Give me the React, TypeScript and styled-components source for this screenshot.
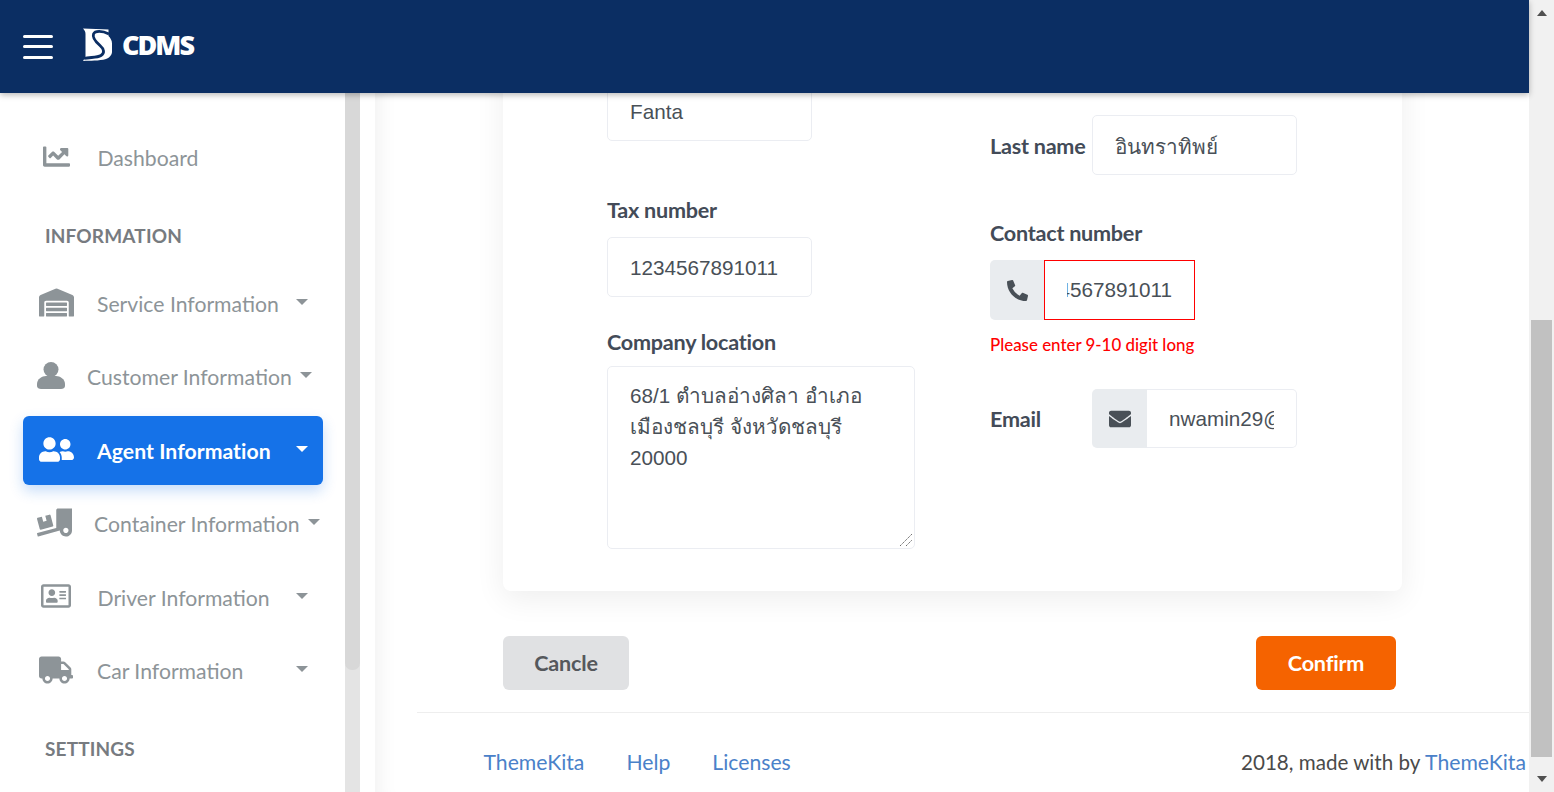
import React from 'react';
import styled, { createGlobalStyle } from 'styled-components';
import {
  FaChartLine,
  FaEnvelope,
  FaPhoneAlt,
  FaRegAddressCard,
  FaTruck,
  FaTruckLoading,
  FaUserFriends,
  FaWarehouse,
} from 'react-icons/fa';

const GlobalStyle = createGlobalStyle`
  html, body {
    margin: 0;
    height: 100%;
    overflow: hidden;
    background: #fff;
    font-family: Lato, "Noto Sans", sans-serif;
  }
  * {
    box-sizing: border-box;
  }
`;

const Page = styled.div`
  display: flex;
  height: 792px;
`;

const Shell = styled.div`
  flex: 1;
  min-width: 0;
  display: flex;
  flex-direction: column;
`;

const Header = styled.header`
  position: relative;
  z-index: 2;
  flex: none;
  height: 93px;
  display: flex;
  align-items: center;
  padding-left: 23px;
  background: #0b2e63;
  box-shadow: 0 2px 6px rgba(0, 0, 0, 0.28);
`;

const Burger = styled.div`
  width: 30px;
  display: grid;
  gap: 7.5px;
  margin-right: 30px;
`;

const BurgerBar = styled.span`
  height: 3px;
  border-radius: 2px;
  background: #fff;
`;

const BrandRow = styled.div`
  display: flex;
  align-items: center;
  margin-top: -4px;
`;

const Brand = styled.span`
  margin-left: 10px;
  color: #fff;
  font: 800 27px/1 'Open Sans', sans-serif;
  letter-spacing: -2px;
`;

const Body = styled.div`
  flex: 1;
  min-height: 0;
  display: flex;
`;

const Sidebar = styled.nav`
  flex: none;
  width: 345px;
  padding-top: 30.45px;
  overflow: hidden;
`;

const NavItem = styled.div<{ $left: number; $active?: boolean }>`
  width: 300px;
  height: 69px;
  margin: 0 0 4.5px 23px;
  padding-left: ${(p) => p.$left}px;
  display: flex;
  align-items: center;
  white-space: nowrap;
  border-radius: 6px;
  font-size: 21.2px;
  font-weight: ${(p) => (p.$active ? 700 : 400)};
  letter-spacing: ${(p) => (p.$active ? '0.05px' : '0')};
  color: ${(p) => (p.$active ? '#fff' : '#8d9498')};
  background: ${(p) => (p.$active ? '#1572e8' : 'transparent')};
  box-shadow: ${(p) => (p.$active ? '0 6px 14px rgba(21, 114, 232, 0.24)' : 'none')};
`;

const NavIcon = styled.span<{ $slot: number }>`
  flex: none;
  width: ${(p) => p.$slot}px;
  display: flex;
  align-items: center;
  margin-top: -3px;
`;

const Caret = styled.span<{ $gap: number }>`
  margin: -4px 0 0 ${(p) => p.$gap}px;
  border-top: 6px solid currentColor;
  border-left: 6px solid transparent;
  border-right: 6px solid transparent;
`;

const SectionTitle = styled.div`
  height: 30px;
  margin: 28.5px 0 18.5px 45px;
  font-size: 19px;
  line-height: 30px;
  font-weight: 700;
  letter-spacing: 0.15px;
  color: #777b80;
`;

const SideTrack = styled.div`
  flex: none;
  width: 15px;
  margin-right: 15px;
  background: #e4e4e4;
`;

const SideThumb = styled.div`
  height: 577px;
  border-radius: 0 0 7px 7px;
  background: #d8d8d8;
`;

const Main = styled.main`
  flex: 1;
  min-width: 0;
  padding-left: 42px;
  overflow: hidden;
  box-shadow: inset 22px 0 20px -18px rgba(0, 0, 0, 0.06);
`;

const Content = styled.div`
  padding-left: 86px;
`;

const Card = styled.section`
  width: 899px;
  margin-top: -40px;
  padding: 28px 0 42px 104px;
  display: flex;
  border-radius: 8px;
  background: #fff;
  box-shadow: 0 8px 30px rgba(0, 0, 0, 0.07);
`;

const LeftColumn = styled.div`
  width: 383px;
`;

const RightColumn = styled.div`
  padding-top: 34px;
`;

const FieldLabel = styled.label<{ $top?: number; $bottom?: number }>`
  display: block;
  height: 30px;
  margin: ${(p) => p.$top ?? 0}px 0 ${(p) => p.$bottom ?? 0}px;
  font-size: 21.6px;
  line-height: 30px;
  font-weight: 700;
  letter-spacing: -0.25px;
  color: #434b58;
`;

const InlineRow = styled.div`
  display: flex;
  align-items: center;
`;

const InlineLabel = styled(FieldLabel)`
  flex: none;
  width: 102px;
`;

const TextInput = styled.input<{ $width?: number; $invalid?: boolean; $height?: number }>`
  display: block;
  width: ${(p) => p.$width ?? 205}px;
  height: ${(p) => p.$height ?? 60}px;
  padding: 1px 22px 0;
  border: 1px solid ${(p) => (p.$invalid ? '#f00' : '#ebedf2')};
  border-radius: ${(p) => (p.$invalid ? '0' : '5px')};
  background: #fff;
  outline: none;
  font: 400 20.7px 'Liberation Sans', Arial, 'Noto Sans', sans-serif;
  color: #495057;
`;

const ThaiInput = styled(TextInput)`
  padding-top: 3px;
`;

const GroupInput = styled(TextInput)`
  flex: none;
  padding-top: ${(p) => (p.$invalid ? 0 : 1)}px;
  border-radius: ${(p) => (p.$invalid ? '0' : '0 5px 5px 0')};
  border-left-width: ${(p) => (p.$invalid ? '1px' : '0')};
  direction: ${(p) => (p.$invalid ? 'rtl' : 'ltr')};
`;

const InputGroup = styled.div`
  display: flex;
`;

const Addon = styled.span<{ $width: number; $height?: number }>`
  flex: none;
  width: ${(p) => p.$width}px;
  height: ${(p) => p.$height ?? 60}px;
  display: flex;
  align-items: center;
  justify-content: center;
  border-radius: 5px 0 0 5px;
  background: #e9ecef;
  color: #495057;
`;

const ErrorText = styled.div`
  height: 24px;
  margin: 13px 0 32px;
  font-size: 16.9px;
  line-height: 24px;
  font-weight: 500;
  color: #f00;
`;

const AddressBox = styled.div`
  position: relative;
  width: 308px;
  height: 183px;
`;

const Address = styled.textarea`
  display: block;
  width: 100%;
  height: 100%;
  padding: 13px 22px;
  border: 1px solid #ebedf2;
  border-radius: 5px;
  outline: none;
  resize: none;
  font: 400 20.7px/31px 'Liberation Sans', Arial, 'Noto Sans', sans-serif;
  color: #495057;
`;

const ResizeGrip = styled.svg`
  position: absolute;
  right: 2px;
  bottom: 2px;
`;

const Actions = styled.div`
  width: 893px;
  margin-top: 45px;
  display: flex;
  justify-content: space-between;
`;

const ActionButton = styled.button<{ $primary?: boolean }>`
  width: ${(p) => (p.$primary ? 140 : 126)}px;
  height: 54px;
  padding: 0;
  border: 0;
  border-radius: 6px;
  font: 700 21.6px Lato, sans-serif;
  letter-spacing: -0.2px;
  color: ${(p) => (p.$primary ? '#fff' : '#55585c')};
  background: ${(p) => (p.$primary ? '#f56300' : '#e0e1e3')};
`;

const Footer = styled.footer`
  margin-top: 22px;
  height: 80px;
  padding: 34px 3px 0 66.5px;
  display: flex;
  justify-content: space-between;
  border-top: 1px solid #eee;
  font-size: 20.6px;
  line-height: 30px;
  color: #4a4a4a;
`;

const FooterLinks = styled.div`
  display: flex;
  gap: 42px;
`;

const FooterLink = styled.a`
  font-size: 21.2px;
  color: #4a81c9;
`;

const WindowScrollbar = styled.div`
  flex: none;
  width: 25px;
  padding: 0 2px;
  display: flex;
  flex-direction: column;
  background: #f1f1f1;
`;

const ScrollArrow = styled.span<{ $down?: boolean }>`
  align-self: center;
  margin-top: ${(p) => (p.$down ? 19 : 10)}px;
  border-left: 5.5px solid transparent;
  border-right: 5.5px solid transparent;
  border-bottom: ${(p) => (p.$down ? '0' : '6px solid #505050')};
  border-top: ${(p) => (p.$down ? '6px solid #505050' : '0')};
`;

const ScrollThumb = styled.div`
  height: 437px;
  margin-top: 304px;
  background: #c1c1c1;
`;

const Logo = () => (
  <svg width="29" height="33" viewBox="0 0 29 33">
    <path
      fill="#fff"
      d="M0 .5 25.500 1.500V8C27.500 10 29 12.500 29 15.500V24C29 27 26 30 23 31 16 33 7 32.500 0 33L2.500 29V6C2.500 3.500 1.500 2 0 .5Z"
    />
    <path
      fill="none"
      stroke="#0b2e63"
      strokeWidth="2.800"
      d="M26 6C19 2.500 12 2.500 10.500 6 9 10 13 14 17 17.500 21 21 22 25 18 27.500 14 30 7 29 1 30.500"
    />
  </svg>
);

const UserIcon = () => (
  <svg width="28" height="27" viewBox="0 0 28 27" fill="currentColor">
    <circle cx="14" cy="7.500" r="7.500" />
    <path d="M0 22C0 17 5 14 9 14H19C23 14 28 17 28 22V24C28 26 26 27 24 27H4C2 27 0 26 0 24Z" />
  </svg>
);

const App: React.FC = () => (
  <>
    <GlobalStyle />
    <Page>
      <Shell>
        <Header>
          <Burger>
            <BurgerBar />
            <BurgerBar />
            <BurgerBar />
          </Burger>
          <BrandRow>
            <Logo />
            <Brand>CDMS</Brand>
          </BrandRow>
        </Header>
        <Body>
          <Sidebar>
            <NavItem $left={20}>
              <NavIcon $slot={54.5}>
                <FaChartLine size={27} />
              </NavIcon>
              Dashboard
            </NavItem>
            <SectionTitle>INFORMATION</SectionTitle>
            <NavItem $left={16}>
              <NavIcon $slot={58}>
                <FaWarehouse size={35} />
              </NavIcon>
              Service Information
              <Caret $gap={17} />
            </NavItem>
            <NavItem $left={14}>
              <NavIcon $slot={50}>
                <UserIcon />
              </NavIcon>
              Customer Information
              <Caret $gap={8} />
            </NavItem>
            <NavItem $left={16} $active>
              <NavIcon $slot={58}>
                <FaUserFriends size={35} />
              </NavIcon>
              Agent Information
              <Caret $gap={25} />
            </NavItem>
            <NavItem $left={14}>
              <NavIcon $slot={57}>
                <FaTruckLoading size={35} />
              </NavIcon>
              Container Information
              <Caret $gap={9} />
            </NavItem>
            <NavItem $left={18}>
              <NavIcon $slot={56.5}>
                <FaRegAddressCard size={30} />
              </NavIcon>
              Driver Information
              <Caret $gap={26} />
            </NavItem>
            <NavItem $left={16}>
              <NavIcon $slot={58}>
                <FaTruck size={34} />
              </NavIcon>
              Car Information
              <Caret $gap={53} />
            </NavItem>
            <SectionTitle>SETTINGS</SectionTitle>
          </Sidebar>
          <SideTrack>
            <SideThumb />
          </SideTrack>
          <Main>
            <Content>
              <Card>
                <LeftColumn>
                  <TextInput readOnly defaultValue="Fanta" />
                  <FieldLabel $top={54} $bottom={12}>Tax number</FieldLabel>
                  <TextInput readOnly defaultValue="1234567891011" />
                  <FieldLabel $top={30} $bottom={9}>Company location</FieldLabel>
                  <AddressBox>
                    <Address
                      readOnly
                      defaultValue={'68/1 ตำบลอ่างศิลา อำเภอ\nเมืองชลบุรี จังหวัดชลบุรี\n20000'}
                    />
                    <ResizeGrip width="14" height="14" viewBox="0 0 14 14" stroke="#6b6b6b" strokeDasharray="1.500 .7">
                      <path d="M1 13 13 1M7 13l6-6" />
                    </ResizeGrip>
                  </AddressBox>
                </LeftColumn>
                <RightColumn>
                  <InlineRow>
                    <InlineLabel $top={1}>Last name</InlineLabel>
                    <ThaiInput readOnly defaultValue="อินทราทิพย์" />
                  </InlineRow>
                  <FieldLabel $top={43} $bottom={12}>Contact number</FieldLabel>
                  <InputGroup>
                    <Addon $width={54}>
                      <FaPhoneAlt size={21} />
                    </Addon>
                    <GroupInput $width={151} $invalid readOnly defaultValue="1234567891011" />
                  </InputGroup>
                  <ErrorText>Please enter 9-10 digit long</ErrorText>
                  <InlineRow>
                    <InlineLabel>Email</InlineLabel>
                    <InputGroup>
                      <Addon $width={55} $height={59}>
                        <FaEnvelope size={22} />
                      </Addon>
                      <GroupInput $width={150} $height={59} readOnly defaultValue="nwamin29@gmail.com" />
                    </InputGroup>
                  </InlineRow>
                </RightColumn>
              </Card>
              <Actions>
                <ActionButton>Cancle</ActionButton>
                <ActionButton $primary>Confirm</ActionButton>
              </Actions>
            </Content>
            <Footer>
              <FooterLinks>
                <FooterLink>ThemeKita</FooterLink>
                <FooterLink>Help</FooterLink>
                <FooterLink>Licenses</FooterLink>
              </FooterLinks>
              <div>
                2018, made with by <FooterLink>ThemeKita</FooterLink>
              </div>
            </Footer>
          </Main>
        </Body>
      </Shell>
      <WindowScrollbar>
        <ScrollArrow />
        <ScrollThumb />
        <ScrollArrow $down />
      </WindowScrollbar>
    </Page>
  </>
);

export default App;
